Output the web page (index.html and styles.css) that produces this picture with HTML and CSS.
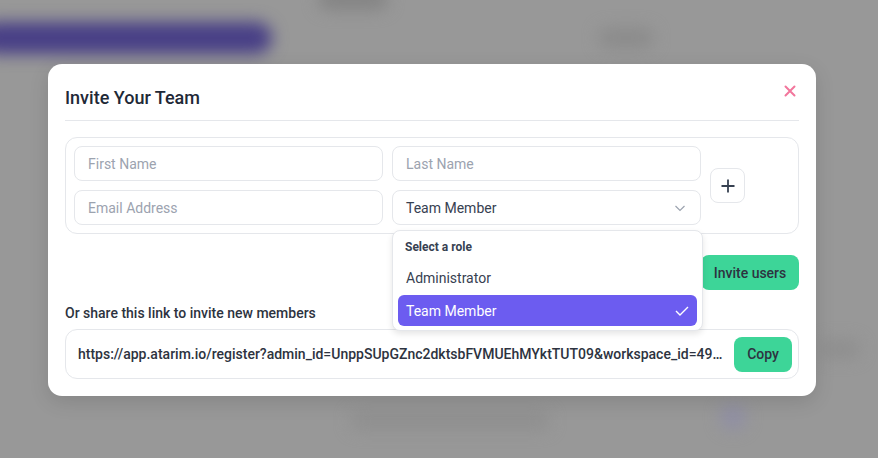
FILE: index.html
```html
<!DOCTYPE html>
<html lang="en">
<head>
  <meta charset="UTF-8">
  <meta name="viewport" content="width=device-width, initial-scale=1.0">
  <title>Invite Your Team</title>
  <link rel="stylesheet" href="styles.css">
</head>
<body>
  <!-- blurred page behind the modal -->
  <div class="backdrop">
    <div class="blob blob-nav"></div>
    <div class="blob blob-a"></div>
    <div class="blob blob-b"></div>
    <div class="blob blob-c"></div>
    <div class="blob blob-d"></div>
    <div class="blob blob-e"></div>
  </div>

  <div class="overlay">
    <div class="modal">
      <div class="modal-header">
        <h2>Invite Your Team</h2>
        <button class="close-btn" aria-label="Close">
          <svg width="12" height="12" viewBox="0 0 12 12"><path d="M1.5 1.5l9 9M10.5 1.5l-9 9" stroke="#f2769c" stroke-width="2" stroke-linecap="round"/></svg>
        </button>
      </div>

      <div class="invite-box">
        <div class="fields">
          <input class="field" type="text" placeholder="First Name">
          <input class="field" type="text" placeholder="Last Name">
          <input class="field" type="text" placeholder="Email Address">
          <div class="select-wrap">
            <div class="field select">
              <span>Team Member</span>
              <svg width="12" height="8" viewBox="0 0 12 8"><path d="M1.5 2l4.5 4.5L10.5 2" fill="none" stroke="#9ca3af" stroke-width="1.2"/></svg>
            </div>
            <div class="dropdown">
              <div class="dropdown-label">Select a role</div>
              <div class="option">Administrator</div>
              <div class="option active">
                <span>Team Member</span>
                <svg width="14" height="10" viewBox="0 0 14 10"><path d="M1 5l4 4 8-8" fill="none" stroke="#fff" stroke-width="1.4"/></svg>
              </div>
            </div>
          </div>
        </div>
        <button class="add-btn" aria-label="Add row">
          <svg width="14" height="14" viewBox="0 0 14 14"><path d="M7 0.5v13M0.5 7h13" stroke="#374151" stroke-width="1.8"/></svg>
        </button>
      </div>

      <div class="actions">
        <button class="btn-green invite-btn">Invite users</button>
      </div>

      <p class="share-label">Or share this link to invite new members</p>
      <div class="link-box">
        <span class="link-text">https://app.atarim.io/register?admin_id=UnppSUpGZnc2dktsbFVMUEhMYktTUT09&amp;workspace_id=4912</span>
        <button class="btn-green copy-btn">Copy</button>
      </div>
    </div>
  </div>
</body>
</html>
```

FILE: styles.css
```css
* {
  margin: 0;
  padding: 0;
  box-sizing: border-box;
}

body {
  font-family: Roboto, "Noto Sans", sans-serif;
  background-color: #989898;
  width: 878px;
  height: 458px;
  overflow: hidden;
  position: relative;
}

/* Background page, blurred */
.backdrop {
  position: absolute;
  inset: 0;
  filter: blur(8px);
}

.blob {
  position: absolute;
  border-radius: 30px;
}

.blob-nav {
  left: -20px;
  top: 22px;
  width: 292px;
  height: 32px;
  background-color: #483f86;
}

.blob-a {
  left: 318px;
  top: -12px;
  width: 70px;
  height: 22px;
  background-color: #848484;
}

.blob-b {
  left: 598px;
  top: 28px;
  width: 56px;
  height: 20px;
  background-color: #8b8b8b;
}

.blob-c {
  left: 350px;
  top: 412px;
  width: 200px;
  height: 18px;
  background-color: #8f8f8f;
}

.blob-d {
  left: 720px;
  top: 404px;
  width: 26px;
  height: 26px;
  background-color: #908fa4;
}

.blob-e {
  left: 820px;
  top: 340px;
  width: 40px;
  height: 18px;
  background-color: #8e8e8e;
}

.overlay {
  position: relative;
  padding: 64px 0 0 48px;
}

.modal {
  width: 768px;
  background-color: #ffffff;
  border-radius: 14px;
  padding: 0 17px 17px;
  box-shadow: 0 6px 20px rgba(0, 0, 0, 0.12);
}

.modal-header {
  display: flex;
  justify-content: space-between;
  align-items: center;
  height: 57px;
  padding-top: 10px;
  border-bottom: 1px solid #e5e7eb;
}

.modal-header h2 {
  font-size: 18px;
  font-weight: 500;
  color: #1f2937;
}

.close-btn {
  border: none;
  background: none;
  width: 12px;
  height: 12px;
  margin: -12px 3px 0 0;
  display: flex;
  cursor: pointer;
}

.invite-box {
  margin-top: 16px;
  border: 1px solid #e5e7eb;
  border-radius: 12px;
  padding: 8px;
  display: flex;
  align-items: center;
  gap: 9px;
}

.fields {
  display: grid;
  grid-template-columns: 309px 309px;
  gap: 9px;
}

.field {
  height: 35px;
  border: 1px solid #e5e7eb;
  border-radius: 8px;
  padding: 0 13px;
  font-family: inherit;
  font-size: 14px;
  color: #374151;
  background-color: #ffffff;
  outline: none;
}

.field::placeholder {
  color: #9ca3af;
}

.select-wrap {
  position: relative;
}

.select {
  display: flex;
  align-items: center;
  justify-content: space-between;
  padding-right: 14px;
}

.dropdown {
  position: absolute;
  top: 40px;
  left: 0;
  width: 311px;
  background-color: #ffffff;
  border: 1px solid #e5e7eb;
  border-radius: 8px;
  padding: 9px 5px 4px;
  box-shadow: 0 3px 6px rgba(0, 0, 0, 0.1);
  z-index: 5;
}

.dropdown-label {
  font-size: 12px;
  font-weight: 700;
  color: #374151;
  padding: 0 7px;
  height: 17px;
}

.option {
  display: flex;
  align-items: center;
  justify-content: space-between;
  height: 31px;
  padding: 0 8px;
  font-size: 14px;
  color: #374151;
  border-radius: 6px;
}

.option:nth-child(2) {
  margin-top: 5px;
  margin-bottom: 2px;
}

.option.active {
  background-color: #6c5cf0;
  color: #ffffff;
}

.add-btn {
  width: 35px;
  height: 35px;
  border: 1px solid #e5e7eb;
  border-radius: 8px;
  background-color: #ffffff;
  display: flex;
  align-items: center;
  justify-content: center;
  cursor: pointer;
}

.actions {
  display: flex;
  justify-content: flex-end;
  margin-top: 21px;
}

.btn-green {
  border: none;
  background-color: #3dd598;
  color: #2d3340;
  font-family: inherit;
  font-size: 14px;
  font-weight: 500;
  border-radius: 8px;
  cursor: pointer;
}

.invite-btn {
  height: 35px;
  width: 98px;
}

.share-label {
  margin-top: 15px;
  font-size: 14px;
  font-weight: 500;
  color: #2d3340;
}

.link-box {
  margin-top: 8px;
  height: 50px;
  border: 1px solid #e5e7eb;
  border-radius: 12px;
  display: flex;
  align-items: center;
  padding: 0 6px 0 12px;
  gap: 7px;
}

.link-text {
  flex: 1;
  min-width: 0;
  white-space: nowrap;
  overflow: hidden;
  text-overflow: ellipsis;
  font-size: 14px;
  font-weight: 500;
  color: #2d3340;
}

.copy-btn {
  height: 35px;
  width: 58px;
  flex-shrink: 0;
}
```
